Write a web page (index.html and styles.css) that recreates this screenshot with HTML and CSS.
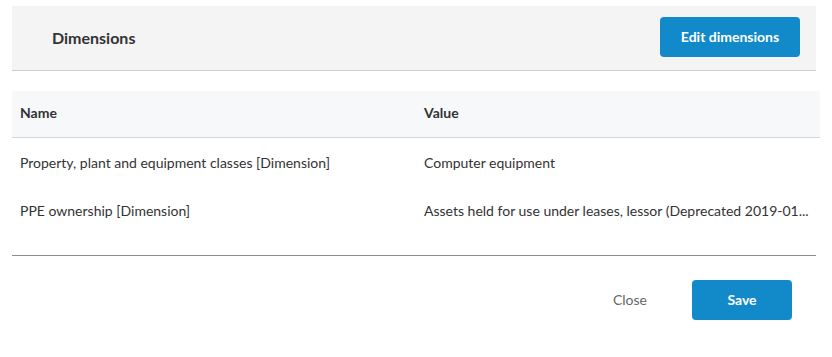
FILE: index.html
```html
<!DOCTYPE html>
<html lang="en">
<head>
    <meta charset="UTF-8">
    <title>Dimensions</title>
    <link rel="stylesheet" href="styles.css">
</head>
<body>
    <div class="panel">
        <div class="panel-header">
            <h2>Dimensions</h2>
            <button class="btn">Edit dimensions</button>
        </div>

        <table class="dims">
            <thead>
                <tr>
                    <th class="col-name">Name</th>
                    <th>Value</th>
                </tr>
            </thead>
            <tbody>
                <tr>
                    <td>Property, plant and equipment classes [Dimension]</td>
                    <td>Computer equipment</td>
                </tr>
                <tr>
                    <td>PPE ownership [Dimension]</td>
                    <td><span class="clip">Assets held for use under leases, lessor (Deprecated 2019-01...</span></td>
                </tr>
            </tbody>
        </table>

        <div class="panel-footer">
            <button class="link">Close</button>
            <button class="btn btn-save">Save</button>
        </div>
    </div>
</body>
</html>
```

FILE: styles.css
```css
body {
    margin: 0;
    font-family: Lato, "Open Sans", sans-serif;
    color: #333;
    background: #fff;
}
.panel {
    padding: 6px 12px 0 12px;
}
.panel-header {
    display: flex;
    align-items: center;
    justify-content: space-between;
    height: 64px;
    margin-right: 4px;
    padding: 0 16px 0 40px;
    background: #f4f4f5;
    border-bottom: 1px solid #cdcdcd;
}
.panel-header h2 {
    margin: 0 0 2px 0;
    font-size: 16px;
    font-weight: 700;
    color: #333;
}
.btn {
    font-family: inherit;
    font-size: 14px;
    font-weight: 700;
    color: #fff;
    background: #1289c8;
    border: none;
    border-radius: 4px;
    height: 40px;
    width: 140px;
    padding-bottom: 3px;
    cursor: pointer;
}
.panel-header .btn {
    margin-bottom: 2px;
}
.dims {
    width: 100%;
    margin-top: 20px;
    border-collapse: collapse;
    font-size: 14px;
}
.dims th {
    text-align: left;
    font-weight: 700;
    height: 43px;
    padding: 0 8px 3px 8px;
    background: #f7f8fa;
    border-bottom: 1px solid #d6d6d6;
}
.dims th.col-name {
    width: 388px;
}
.dims td {
    height: 48px;
    padding: 0 8px;
    white-space: nowrap;
}
.clip {
    display: block;
    width: 388px;
    white-space: nowrap;
}
.panel-footer {
    display: flex;
    align-items: center;
    justify-content: flex-end;
    gap: 45px;
    margin-top: 21px;
    margin-right: 4px;
    padding: 24px 24px 0 0;
    border-top: 1px solid #8a8d91;
}
.link {
    font-family: inherit;
    font-size: 14px;
    color: #666;
    background: none;
    border: none;
    padding: 0 0 2px 0;
    cursor: pointer;
}
.btn-save {
    width: 100px;
}
```
